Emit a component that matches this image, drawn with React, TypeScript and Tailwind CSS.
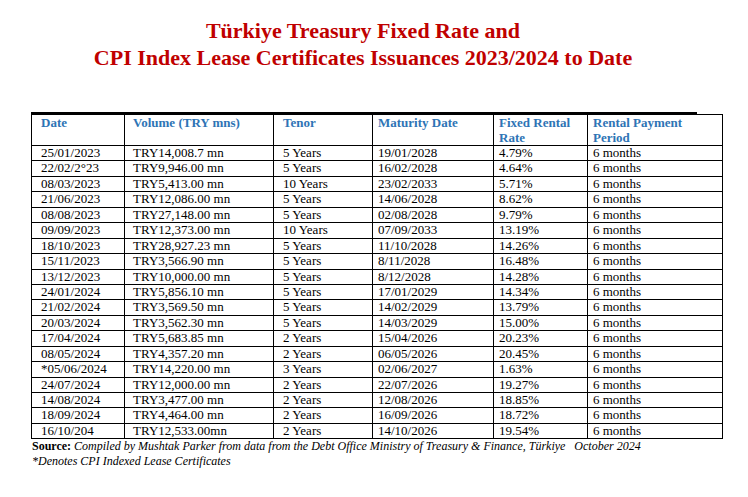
import React from "react";

const rows: string[][] = [
  ["25/01/2023", "TRY14,008.7 mn", "5 Years", "19/01/2028", "4.79%", "6 months"],
  ["22/02/2°23", "TRY9,946.00 mn", "5 Years", "16/02/2028", "4.64%", "6 months"],
  ["08/03/2023", "TRY5,413.00 mn", "10 Years", "23/02/2033", "5.71%", "6 months"],
  ["21/06/2023", "TRY12,086.00 mn", "5 Years", "14/06/2028", "8.62%", "6 months"],
  ["08/08/2023", "TRY27,148.00 mn", "5 Years", "02/08/2028", "9.79%", "6 months"],
  ["09/09/2023", "TRY12,373.00 mn", "10 Years", "07/09/2033", "13.19%", "6 months"],
  ["18/10/2023", "TRY28,927.23 mn", "5 Years", "11/10/2028", "14.26%", "6 months"],
  ["15/11/2023", "TRY3,566.90 mn", "5 Years", "8/11/2028", "16.48%", "6 months"],
  ["13/12/2023", "TRY10,000.00 mn", "5 Years", "8/12/2028", "14.28%", "6 months"],
  ["24/01/2024", "TRY5,856.10 mn", "5 Years", "17/01/2029", "14.34%", "6 months"],
  ["21/02/2024", "TRY3,569.50 mn", "5 Years", "14/02/2029", "13.79%", "6 months"],
  ["20/03/2024", "TRY3,562.30 mn", "5 Years", "14/03/2029", "15.00%", "6 months"],
  ["17/04/2024", "TRY5,683.85 mn", "2 Years", "15/04/2026", "20.23%", "6 months"],
  ["08/05/2024", "TRY4,357.20 mn", "2 Years", "06/05/2026", "20.45%", "6 months"],
  ["*05/06/2024", "TRY14,220.00 mn", "3 Years", "02/06/2027", "1.63%", "6 months"],
  ["24/07/2024", "TRY12,000.00 mn", "2 Years", "22/07/2026", "19.27%", "6 months"],
  ["14/08/2024", "TRY3,477.00 mn", "2 Years", "12/08/2026", "18.85%", "6 months"],
  ["18/09/2024", "TRY4,464.00 mn", "2 Years", "16/09/2026", "18.72%", "6 months"],
  ["16/10/204", "TRY12,533.00mn", "2 Years", "14/10/2026", "19.54%", "6 months"],
];

const pads = ["pl-[9px]", "pl-[8px]", "pl-[9px]", "pl-[5px]", "pl-[5px]", "pl-[5px]"];

const headers: React.ReactNode[] = [
  "Date",
  "Volume (TRY mns)",
  "Tenor",
  "Maturity Date",
  <>
    Fixed Rental
    <br />
    Rate
  </>,
  <>
    Rental Payment
    <br />
    Period
  </>,
];

export default function App() {
  return (
    <div className="w-[748px] h-[497px] bg-white font-['Liberation_Serif',serif] text-black overflow-hidden pt-[17px]">
      <div className="w-[726px] text-center text-[22px] leading-[27px] font-bold text-[#c00000]">
        <div>Türkiye Treasury Fixed Rate and</div>
        <div>CPI Index Lease Certificates Issuances 2023/2024 to Date</div>
      </div>
      <div className="ml-[31px] mt-[41px] w-[666px] h-[2px] bg-black" />
      <div className="ml-[31px] w-fit grid grid-cols-[93px_149px_99px_121px_94px_135px] border-r border-b border-black">
        {headers.map((h, i) => (
          <div
            key={"h" + i}
            className={`h-[31px] border-l border-t border-black ${pads[i]} text-[13px] leading-[15px] font-bold text-[#2e74b5] whitespace-nowrap`}
          >
            {h}
          </div>
        ))}
        {rows.map((r, ri) =>
          r.map((c, ci) => (
            <div
              key={ri + "-" + ci}
              className={`h-[15.44px] border-l border-t border-black ${pads[ci]} text-[13px] leading-[14.44px] whitespace-nowrap`}
            >
              {c}
            </div>
          ))
        )}
      </div>
      <div className="pl-[32px] text-[12px] leading-[15px] whitespace-pre">
        <div>
          <span className="font-bold">Source:</span>
          <span className="italic"> Compiled by Mushtak Parker from data from the Debt Office Ministry of Treasury &amp; Finance, Türkiye   October 2024</span>
        </div>
        <div className="italic">*Denotes CPI Indexed Lease Certificates</div>
      </div>
    </div>
  );
}
